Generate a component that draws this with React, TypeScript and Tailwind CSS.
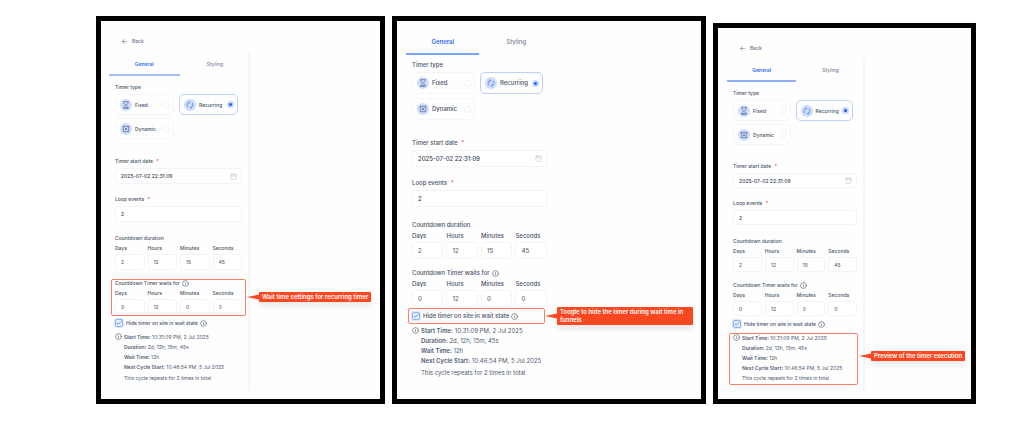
import type { ReactNode } from "react";
import { ArrowLeft, Calendar, Check, Info } from "lucide-react";

type Variant = {
  id: string;
  frame: string;
  back: boolean;
  sidebar: string;
  tabs: string;
  underline: string;
  typeLabel: string;
  cards: string;
  card: string;
  startDate: string;
  loop: string;
  duration: string;
  waits: string;
  unitGap: string;
  input: string;
  hide: string;
  summary: string;
  cycle: string;
  callout: "wait" | "hide" | "preview";
};

const variants: Variant[] = [
  {
    id: "wait",
    frame: "grow-[289] text-[5px]",
    back: true,
    sidebar: "w-[149px] pl-2 pt-4",
    tabs: "mt-2 h-[23px]",
    underline: "border-[#a3bffa]",
    typeLabel: "pt-[7px]",
    cards: "gap-y-[3px]",
    card: "h-[21px]",
    startDate: "mt-[18px]",
    loop: "mt-[11px]",
    duration: "mt-3",
    waits: "mt-[9px]",
    unitGap: "mt-0.5",
    input: "h-4",
    hide: "mt-1",
    summary: "mt-[5px]",
    cycle: "mt-px",
    callout: "wait",
  },
  {
    id: "hide",
    frame: "grow-[315] text-[6px]",
    back: false,
    sidebar: "w-[156px] pl-[9px] pt-[9px]",
    tabs: "h-[25px]",
    underline: "border-[#7ba3fa]",
    typeLabel: "pt-1.5",
    cards: "gap-y-1",
    card: "h-[22px]",
    startDate: "mt-[19px]",
    loop: "mt-3",
    duration: "mt-3.5",
    waits: "mt-2.5",
    unitGap: "mt-[3px]",
    input: "h-[17px]",
    hide: "mt-[5px]",
    summary: "mt-1.5",
    cycle: "mt-0.5",
    callout: "hide",
  },
  {
    id: "preview",
    frame: "mt-[7px] grow-[262] text-[5px]",
    back: true,
    sidebar: "w-[147px] pl-[9px] pt-4",
    tabs: "mt-[7px] h-[23px]",
    underline: "border-[#8fb1fa]",
    typeLabel: "pt-[7px]",
    cards: "gap-y-[3px]",
    card: "h-[21px]",
    startDate: "mt-[17px]",
    loop: "mt-[11px]",
    duration: "mt-3",
    waits: "mt-[9px]",
    unitGap: "mt-0.5",
    input: "h-[15px]",
    hide: "mt-1",
    summary: "mt-[5px]",
    cycle: "mt-0",
    callout: "preview",
  },
];

const inputBase =
  "block w-full min-w-0 rounded-[3px] border border-[#f3f4f6] bg-white pl-[5px] outline-none";

function HourglassIcon() {
  return (
    <svg className="size-2" viewBox="0 0 24 24" fill="none" stroke="currentColor" strokeWidth="2">
      <path d="M4 2h16M4 22h16M6 2v5l5 5-5 5v5M18 2v5l-5 5 5 5v5M8 19h8" />
    </svg>
  );
}

function RecurringIcon() {
  return (
    <svg className="size-2 text-[#2f6af5]" viewBox="0 0 24 24" fill="none" stroke="currentColor" strokeWidth="2">
      <path d="M10 4a8.500 8.500 0 0 0-4 14.500M14 20a8.500 8.500 0 0 0 4-14.500M8 1l3 3-3 3M16 23l-3-3 3-3" />
    </svg>
  );
}

function DynamicIcon() {
  return (
    <svg className="size-2" viewBox="0 0 24 24" fill="none" stroke="currentColor" strokeWidth="2">
      <path d="M2 4h20M4 4v16h16V4M8 8l8 8M16 8l-8 8" />
    </svg>
  );
}

function Callout({ box, label, text }: { box: string; label: string; text: string }) {
  return (
    <>
      <div className={`pointer-events-none absolute rounded-[2px] border border-[#fb8066] ${box}`} />
      <div className={`absolute z-10 flex items-center text-[6px] leading-2 ${label}`}>
        <svg className="h-1.5 w-3 shrink-0" viewBox="0 0 12 6">
          <path d="M0 3 L12 0.5 V5.5 Z" fill="#fa4a26" />
        </svg>
        <p className="rounded-[1px] bg-[#fa4621] px-[3px] py-px font-semibold text-white shadow-[0_5px_5px_rgba(0,0,0,0.07)]">
          {text}
        </p>
      </div>
    </>
  );
}

function TypeCard({
  name,
  group,
  icon,
  height,
  checked = false,
}: {
  name: string;
  group: string;
  icon: ReactNode;
  height: string;
  checked?: boolean;
}) {
  return (
    <label
      className={`flex items-center rounded-[5px] border pl-1 pr-[3px] ${height} ${
        checked ? "border-[#bdd0fc]" : "border-[#f5f6f8]"
      }`}
    >
      <span className="flex size-3 shrink-0 items-center justify-center rounded-full bg-[#cfddfc] text-[#4b5f8f]">
        {icon}
      </span>
      <span className="ml-[3px] grow">{name}</span>
      <input
        type="radio"
        name={group}
        defaultChecked={checked}
        className="size-[7px] shrink-0 appearance-none rounded-full border border-[#eef0f3] checked:border-2 checked:border-[#c7d7fd] checked:bg-[#155eef]"
      />
    </label>
  );
}

function Field({
  id,
  label,
  value,
  input,
  icon,
}: {
  id: string;
  label: string;
  value: string;
  input: string;
  icon?: ReactNode;
}) {
  return (
    <>
      <label htmlFor={id} className="block">
        {label} <span className="ml-0.5 text-[#f04438]">*</span>
      </label>
      <div className="relative mt-[3px]">
        <input id={id} defaultValue={value} className={`${inputBase} text-[#344054] ${input}`} />
        {icon}
      </div>
    </>
  );
}

function Units({ id, values, gap, input }: { id: string; values: string[]; gap: string; input: string }) {
  const names = ["Days", "Hours", "Minutes", "Seconds"];
  return (
    <div className={`grid grid-cols-4 gap-x-[3px] ${gap}`}>
      {names.map((name, i) => (
        <div key={name}>
          <label htmlFor={`${id}-${name}`} className="block">
            {name}
          </label>
          <input
            id={`${id}-${name}`}
            defaultValue={values[i]}
            className={`mt-0.5 ${inputBase} text-[#5d6573] ${input}`}
          />
        </div>
      ))}
    </div>
  );
}

function Panel({ v }: { v: Variant }) {
  return (
    <section className={`min-w-0 basis-0 border-[5px] border-black bg-[#fefefe] pb-2 ${v.frame}`}>
      <div className={`relative ${v.sidebar}`}>
        {v.back && (
          <button className="ml-3 flex items-center gap-1 text-[#667085]">
            <ArrowLeft className="size-[7px]" />
            Back
          </button>
        )}
        <div className={v.back ? "border-r-2 border-[#f6f6f7] pb-2" : "pb-2"}>
          <div className={`flex ${v.back ? "-mr-0.5" : ""} ${v.tabs}`}>
            <button className={`flex-1 border-b-2 font-semibold text-[#2f6af5] ${v.underline}`}>General</button>
            <button className="flex-1 border-b-2 border-transparent text-[#7a8294]">Styling</button>
          </div>

          <div className="mx-1.5">
            <h3 className={v.typeLabel}>Timer type</h3>
            <div className={`mr-1 mt-[3px] grid grid-cols-2 gap-x-[5px] ${v.cards}`}>
              <TypeCard name="Fixed" group={v.id} height={v.card} icon={<HourglassIcon />} />
              <TypeCard name="Recurring" group={v.id} height={v.card} icon={<RecurringIcon />} checked />
              <TypeCard name="Dynamic" group={v.id} height={v.card} icon={<DynamicIcon />} />
            </div>

            <div className={v.startDate}>
              <Field
                id={`${v.id}-start`}
                label="Timer start date"
                value="2025-07-02 22:31:09"
                input={v.input}
                icon={<Calendar className="absolute inset-y-0 right-[5px] my-auto size-[7px] text-[#c3c7cf]" />}
              />
            </div>
            <div className={v.loop}>
              <Field id={`${v.id}-loop`} label="Loop events" value="2" input={v.input} />
            </div>

            <div className={v.duration}>
              <h3>Countdown duration</h3>
              <Units id={`${v.id}-duration`} values={["2", "12", "15", "45"]} gap={v.unitGap} input={v.input} />
            </div>

            <div className={`relative ${v.waits}`}>
              <h3 className="flex items-center gap-0.5">
                Countdown Timer waits for <Info className="size-[7px]" />
              </h3>
              <Units id={`${v.id}-waits`} values={["0", "12", "0", "0"]} gap={v.unitGap} input={v.input} />
              {v.callout === "wait" && (
                <Callout
                  box="-inset-x-1 -bottom-px top-0"
                  label="inset-y-0 left-full ml-[5px] whitespace-nowrap"
                  text="Wait time settings for recurring timer"
                />
              )}
            </div>

            <div className={`relative ${v.hide}`}>
              <label className="flex items-center">
                <span className="relative flex size-2 items-center justify-center">
                  <input
                    type="checkbox"
                    defaultChecked
                    className="absolute inset-0 appearance-none rounded-[2px] border border-[#8fb0fb] bg-[#eaf0fe] ring-1 ring-[#dbe6fe]"
                  />
                  <Check className="relative size-1.5 text-[#2f6af5]" strokeWidth={3} />
                </span>
                <span className="ml-[3px] mr-0.5">Hide timer on site in wait state</span>
                <Info className="size-[7px]" />
              </label>
              {v.callout === "hide" && (
                <Callout
                  box="-left-1 right-0.5 -inset-y-1"
                  label="inset-y-0 left-full -ml-0.5 w-[148px]"
                  text="Toogle to hide the timer during wait time in funnels"
                />
              )}
            </div>

            <div className={`relative flex gap-0.5 leading-[10px] ${v.summary}`}>
              <Info className="mt-px size-[7px] shrink-0" />
              <div className="whitespace-nowrap font-normal text-[#4f5b70]">
                <p>
                  <b className="font-semibold">Start Time:</b> 10:31:09 PM, 2 Jul 2025
                </p>
                <p>
                  <b className="font-semibold">Duration:</b> 2d, 12h, 15m, 45s
                </p>
                <p>
                  <b className="font-semibold">Wait Time:</b> 12h
                </p>
                <p>
                  <b className="font-semibold">Next Cycle Start:</b> 10:46:54 PM, 5 Jul 2025
                </p>
                <p className={v.cycle}>This cycle repeats for 2 times in total</p>
              </div>
              {v.callout === "preview" && (
                <Callout
                  box="-left-1 -right-px -bottom-0.5 top-0"
                  label="left-full top-[18px] ml-0.5 whitespace-nowrap"
                  text="Preview of the timer execution"
                />
              )}
            </div>
          </div>
        </div>
      </div>
    </section>
  );
}

export default function App() {
  return (
    <main className="bg-white pb-7 pl-24 pr-12 pt-4 font-['Inter',sans-serif] font-medium leading-2 text-[#475467]">
      <div className="flex gap-[7px]">
        {variants.map((v) => (
          <Panel key={v.id} v={v} />
        ))}
      </div>
    </main>
  );
}
